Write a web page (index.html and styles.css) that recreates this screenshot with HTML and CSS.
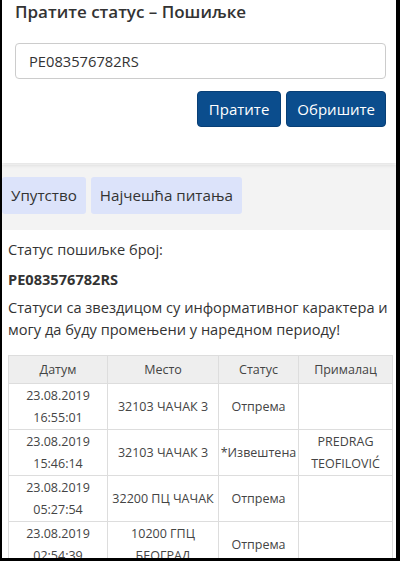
FILE: index.html
```html
<!DOCTYPE html>
<html>
<head>
<meta charset="utf-8">
<link rel="stylesheet" href="styles.css">
</head>
<body>
<div class="page">
  <div class="panel">
    <h1 class="title">Пратите статус – Пошиљке</h1>
    <div class="input">PE083576782RS</div>
    <div class="actions">
      <button class="btn">Пратите</button>
      <button class="btn">Обришите</button>
    </div>
  </div>
  <div class="tabs">
    <div class="tab">Упутство</div>
    <div class="tab">Најчешћа питања</div>
  </div>
  <div class="content">
    <p class="label">Статус пошиљке број:</p>
    <p class="code">PE083576782RS</p>
    <p class="note">Статуси са звездицом су информативног карактера и могу да буду промењени у наредном периоду!</p>
    <table class="grid">
      <colgroup><col class="c1"><col class="c2"><col class="c3"><col class="c4"></colgroup>
      <thead>
        <tr><th>Датум</th><th>Место</th><th>Статус</th><th>Прималац</th></tr>
      </thead>
      <tbody>
        <tr><td>23.08.2019<br>16:55:01</td><td>32103 ЧАЧАК 3</td><td>Отпрема</td><td></td></tr>
        <tr><td>23.08.2019<br>15:46:14</td><td>32103 ЧАЧАК 3</td><td>*Извештена</td><td>PREDRAG<br>TEOFILOVIĆ</td></tr>
        <tr><td>23.08.2019<br>05:27:54</td><td>32200 ПЦ ЧАЧАК</td><td>Отпрема</td><td></td></tr>
        <tr><td>23.08.2019<br>02:54:39</td><td>10200 ГПЦ<br>БЕОГРАД</td><td>Отпрема</td><td></td></tr>
      </tbody>
    </table>
  </div>
</div>
</body>
</html>
```
FILE: styles.css
```css
html { background: #000; margin: 0; padding: 0; }
body { margin: 0 4px 0 2px; padding: 0; font-family: "Open Sans", "Noto Sans", sans-serif; color: #333; }
.page { background: #fff; height: 558px; overflow: hidden; }
.panel { background: #fff; padding: 0 10px 0 13px; height: 163px; box-sizing: border-box; box-shadow: 0 2px 4px rgba(0,0,0,0.12); position: relative; }
.title { margin: 0; font-size: 17px; font-weight: 600; line-height: 24px; color: #333; }
.input { margin-top: 19px; height: 36px; box-sizing: border-box; border: 1px solid #ccc; border-radius: 4px; padding: 0 13px; font-size: 14.7px; line-height: 34px; color: #333; }
.actions { display: flex; justify-content: flex-end; gap: 5px; margin-top: 12px; }
.btn { background: #0b4d8d; color: #fff; border: 1px solid #083f76; border-radius: 4px; height: 36px; padding: 0 11px; font-family: inherit; font-size: 15px; }
.btn + .btn { padding: 0 10px; }
.tabs { background: #f3f3f3; height: 65px; margin-top: 2px; display: flex; gap: 5px; padding-top: 12px; box-sizing: border-box; align-items: flex-start; }
.tab { background: #dce3fa; height: 37px; line-height: 37px; padding: 0 9px; font-size: 15.2px; border-radius: 3px; }
.content { padding: 8px 4px 0 6px; }
.label { margin: 0; font-size: 14.6px; line-height: 22px; }
.code { margin: 8px 0 0; font-size: 14.6px; font-weight: 700; line-height: 22px; }
.note { margin: 6px 0 0; font-size: 14.6px; line-height: 22px; }
.grid { margin-top: 15px; width: 384px; border-collapse: collapse; font-size: 12.5px; table-layout: fixed; color: #444; }
.grid th, .grid td { border: 1px solid #ddd; text-align: center; font-weight: 400; padding: 0; line-height: 22px; }
.grid th { background: #eee; height: 27px; }
.grid td { height: 45px; }
.c1 { width: 99px; }
.c2 { width: 111px; }
.c3 { width: 80px; }
.c4 { width: 94px; }
```
